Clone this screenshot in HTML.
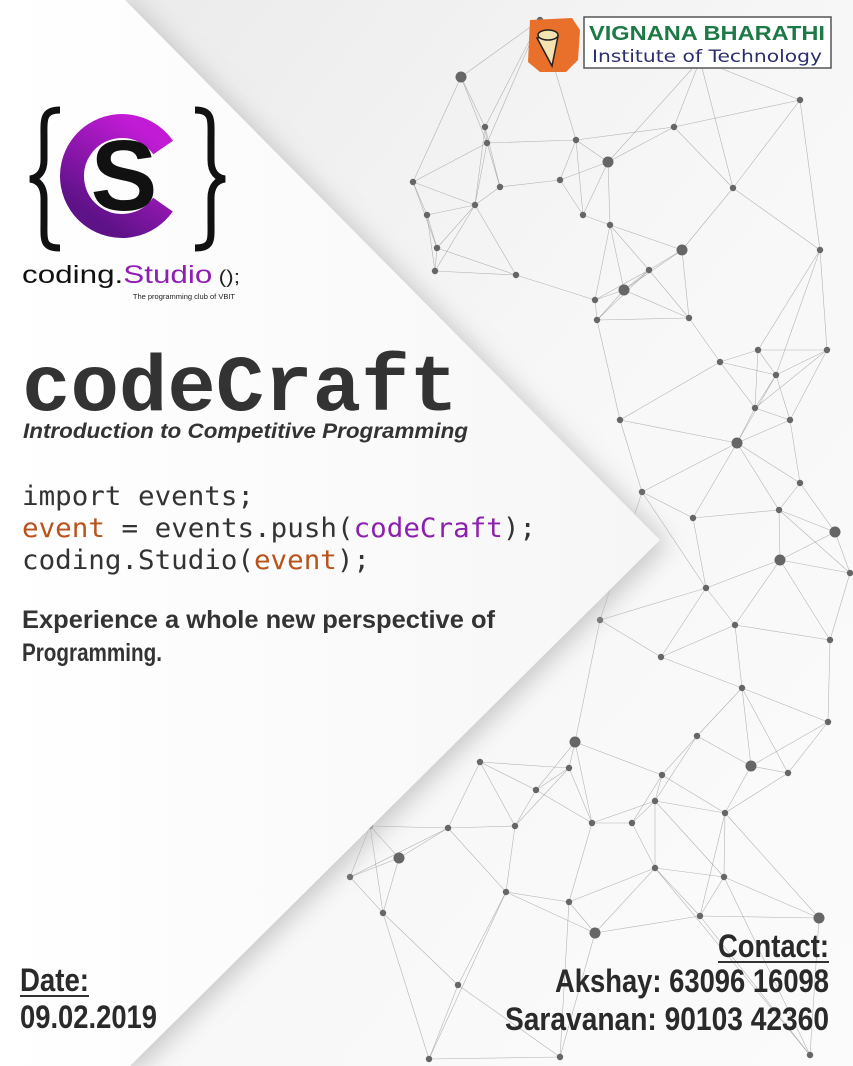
<!DOCTYPE html>
<html><head><meta charset="utf-8"><style>
html,body{margin:0;padding:0;width:853px;height:1066px;overflow:hidden;background:#f3f3f3}
svg{display:block}
</style></head><body>
<svg id="s" width="853" height="1066" viewBox="0 0 853 1066" xmlns="http://www.w3.org/2000/svg">
<defs>
<linearGradient id="bg" x1="0" y1="0" x2="1" y2="1">
<stop offset="0" stop-color="#e9e9e9"/><stop offset="0.5" stop-color="#f7f7f7"/><stop offset="1" stop-color="#fbfbfb"/>
</linearGradient>
<linearGradient id="panel" x1="0" y1="0" x2="1" y2="0">
<stop offset="0" stop-color="#ffffff"/><stop offset="1" stop-color="#f6f6f6"/>
</linearGradient>
<linearGradient id="cg" x1="0" y1="0" x2="0" y2="1">
<stop offset="0" stop-color="#c21bd6"/><stop offset="1" stop-color="#5e1288"/>
</linearGradient>
<filter id="sh" x="-20%" y="-20%" width="140%" height="140%"><feGaussianBlur stdDeviation="12"/></filter>
</defs>
<rect width="853" height="1066" fill="url(#bg)"/>
<g id="net"></g>
<polygon points="0,0 125,0 660,540 130,1066 0,1066" fill="#bbb" filter="url(#sh)" transform="translate(8,4)" opacity="0.8"/>
<polygon points="0,0 125,0 660,540 130,1066 0,1066" fill="url(#panel)"/>

<!-- VBIT logo -->
<path d="M530,20 L572,18 L580,30 L578,60 L566,72 L540,72 L528,62 Z" fill="#e8702a"/>
<path d="M537,38 L552,66 L558,36 Z" fill="#f4e3b0" stroke="#222" stroke-width="1.5"/>
<ellipse cx="548" cy="35" rx="10" ry="5" fill="#f4e3b0" stroke="#222" stroke-width="1.5"/>
<rect x="584" y="17" width="247" height="51" fill="#fff" stroke="#555" stroke-width="1.5"/>
<text x="589" y="40" font-family="Liberation Sans, sans-serif" font-weight="bold" font-size="20" fill="#1d7a46" textLength="236" lengthAdjust="spacingAndGlyphs">VIGNANA BHARATHI</text>
<text x="592" y="62" font-family="DejaVu Sans, sans-serif" font-size="17" fill="#2a2e6e" textLength="230" lengthAdjust="spacingAndGlyphs">Institute of Technology</text>

<!-- coding studio logo -->
<path id="lb" d="M60,110 C42,110 44,120 44,140 L44,160 C44,172 38,178 30,179 C38,180 44,186 44,198 L44,220 C44,240 42,248 60,248" fill="none" stroke="#111" stroke-width="7"/>
<path d="M195,110 C213,110 211,120 211,140 L211,160 C211,172 217,178 225,179 C217,180 211,186 211,198 L211,220 C211,240 213,248 195,248" fill="none" stroke="#111" stroke-width="7"/>
<circle cx="122" cy="176" r="50" fill="none" stroke="url(#cg)" stroke-width="24" stroke-dasharray="253 61" transform="rotate(35 122 176)"/>
<text x="124" y="210" text-anchor="middle" font-family="Liberation Sans, sans-serif" font-weight="bold" font-size="100" fill="#111">S</text>
<text x="22" y="283" font-family="Liberation Sans, sans-serif" font-size="25" fill="#111" textLength="218" lengthAdjust="spacingAndGlyphs">coding.<tspan fill="#8e1fb0">Studio</tspan><tspan font-size="18" fill="#222"> ();</tspan></text>
<text x="235" y="299" text-anchor="end" font-family="Liberation Sans, sans-serif" font-size="7.5" fill="#222">The programming club of VBIT</text>

<!-- title -->
<text x="22" y="410" font-family="Liberation Mono, monospace" font-weight="bold" font-size="80" fill="#333" textLength="436" lengthAdjust="spacingAndGlyphs">codeCraft</text>
<text x="23" y="438" font-family="Liberation Sans, sans-serif" font-weight="bold" font-style="italic" font-size="21" fill="#333" textLength="445" lengthAdjust="spacingAndGlyphs">Introduction to Competitive Programming</text>

<g font-family="DejaVu Sans Mono, Liberation Mono, monospace" font-size="27" fill="#333">
<text x="22" y="505" textLength="232" lengthAdjust="spacingAndGlyphs">import events;</text>
<text x="22" y="537" textLength="514" lengthAdjust="spacingAndGlyphs"><tspan fill="#b8531c">event</tspan> = events.push(<tspan fill="#8d1fae">codeCraft</tspan>);</text>
<text x="22" y="569" textLength="348" lengthAdjust="spacingAndGlyphs">coding.Studio(<tspan fill="#b8531c">event</tspan>);</text>
</g>
<g font-family="Liberation Sans, sans-serif" font-weight="bold" font-size="25" fill="#333">
<text x="22" y="628" textLength="473" lengthAdjust="spacingAndGlyphs">Experience a whole new perspective of</text>
<text x="22" y="661" textLength="140" lengthAdjust="spacingAndGlyphs">Programming.</text>
</g>

<g font-family="Liberation Sans, sans-serif" font-weight="bold" font-size="32" fill="#2a2a2a">
<text x="20" y="991" textLength="69" lengthAdjust="spacingAndGlyphs">Date:</text>
<rect x="20" y="995" width="69" height="2" fill="#333"/>
<text x="20" y="1028" textLength="137" lengthAdjust="spacingAndGlyphs">09.02.2019</text>
<text x="718" y="957" textLength="111" lengthAdjust="spacingAndGlyphs">Contact:</text>
<rect x="718" y="961" width="111" height="2" fill="#333"/>
<text x="555" y="992" textLength="274" lengthAdjust="spacingAndGlyphs">Akshay: 63096 16098</text>
<text x="505" y="1030" textLength="324" lengthAdjust="spacingAndGlyphs">Saravanan: 90103 42360</text>
</g>
</svg>
<script>
var N=[[461,77],[485,127],[487,143],[413,182],[500,187],[576,140],[674,127],[608,162],[560,180],[427,215],[475,205],[583,215],[610,225],[733,188],[682,250],[649,270],[516,275],[437,248],[435,271],[595,300],[597,320],[624,290],[689,318],[758,350],[776,375],[827,350],[755,408],[720,362],[737,443],[790,420],[800,483],[642,492],[693,518],[779,510],[706,588],[835,532],[850,573],[735,625],[661,657],[742,688],[828,722],[830,640],[575,742],[480,762],[536,790],[569,768],[662,775],[697,736],[655,801],[751,766],[788,773],[592,823],[632,823],[515,826],[448,828],[370,826],[399,858],[350,877],[506,892],[655,868],[724,877],[725,813],[700,916],[819,918],[569,902],[383,913],[458,985],[560,1057],[429,1059],[810,1055],[595,933],[540,20],[700,60],[800,100],[820,250],[600,620],[620,420],[780,560]];
var g=document.getElementById('net'),h='';
var seen={};
N.forEach(function(a,i){
 var d=N.map(function(b,j){return [Math.hypot(a[0]-b[0],a[1]-b[1]),j]}).sort(function(x,y){return x[0]-y[0]});
 for(var k=1;k<=4;k++){var j=d[k][1],key=Math.min(i,j)+'-'+Math.max(i,j);if(seen[key])continue;seen[key]=1;
  h+='<line x1="'+a[0]+'" y1="'+a[1]+'" x2="'+N[j][0]+'" y2="'+N[j][1]+'" stroke="#888" stroke-width="0.6" opacity="0.6"/>';}
});
N.forEach(function(a,i){var r=(i%7==0)?5.5:3.2;h+='<circle cx="'+a[0]+'" cy="'+a[1]+'" r="'+r+'" fill="#666"/>';});
g.innerHTML=h;
</script>
</body></html>
